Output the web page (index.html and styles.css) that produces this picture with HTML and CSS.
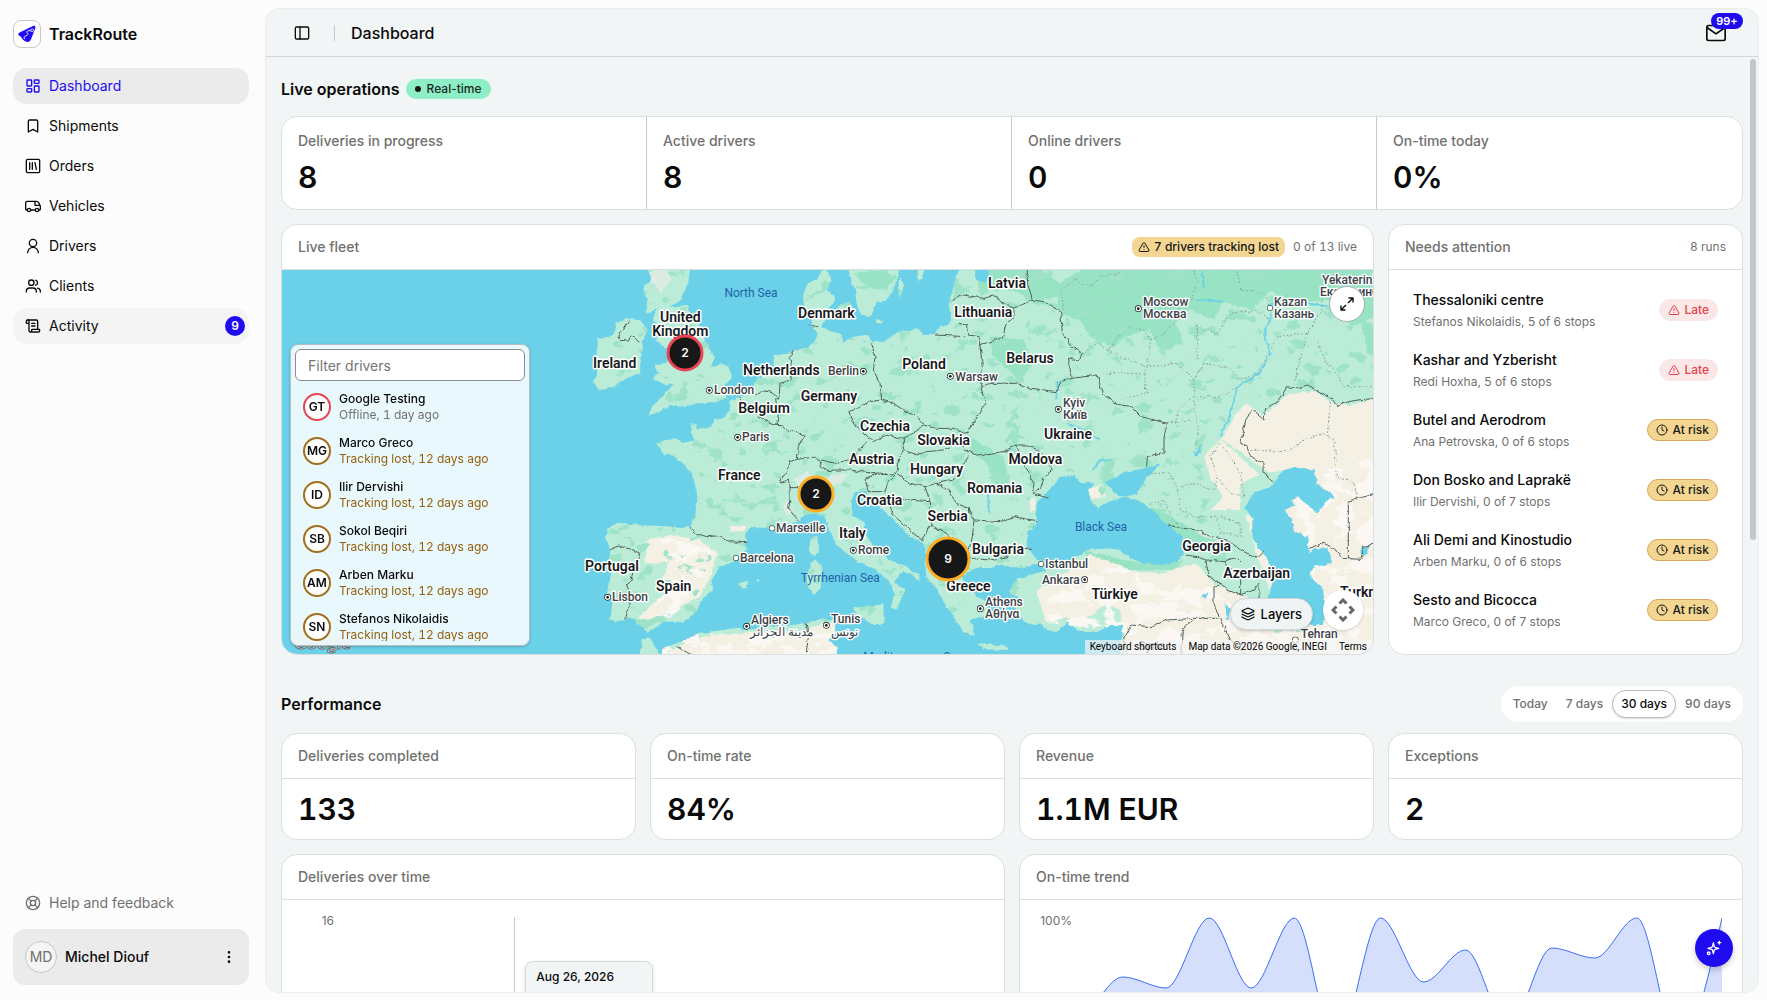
FILE: index.html
```html
<!DOCTYPE html>
<html lang="en">
<head>
<meta charset="utf-8">
<title>TrackRoute</title>
<meta name="viewport" content="width=device-width, initial-scale=1">
<link rel="stylesheet" href="styles.css">
</head>
<body>
<svg class="defs" width="0" height="0" aria-hidden="true">
  <symbol id="i-warn" viewBox="0 0 24 24"><path d="m21.73 18-8-14a2 2 0 0 0-3.48 0l-8 14A2 2 0 0 0 4 21h16a2 2 0 0 0 1.73-3M12 9v4M12 17h.01"/></symbol>
  <symbol id="i-clock" viewBox="0 0 24 24"><circle cx="12" cy="12" r="10"/><path d="M12 6v6l4 2"/></symbol>
</svg>
<div class="app">
  <aside class="sidebar">
    <div class="brand">
      <span class="logo"><svg viewBox="0 0 28 28"><path d="M4.500 14.500Q4.500 12.800 6.500 12L20.500 5.400Q23.400 4.600 23 7.500L18.500 19.500Q17.300 23 14.700 22.600Q10 21.500 8.500 18.500Q7.500 16 5.500 15.800Z" fill="#1f0bf0"/><path d="M19.500 8.500a1.500 1.500 0 1 0 .1 0M18.200 10.500Q13.500 9.800 14 12.500Q16.500 14.500 12 16.500Q9.500 17.500 11.500 19.500" fill="none" stroke="#fff" stroke-width="1"/></svg></span>
      <span class="brand-name">TrackRoute</span>
    </div>
    <nav class="nav">
      <a class="nav-item active" href="#"><svg class="icon" viewBox="0 0 24 24"><rect width="7" height="9" x="3" y="3" rx="1"/><rect width="7" height="5" x="14" y="3" rx="1"/><rect width="7" height="9" x="14" y="12" rx="1"/><rect width="7" height="5" x="3" y="16" rx="1"/></svg>Dashboard</a>
      <a class="nav-item" href="#"><svg class="icon" viewBox="0 0 24 24"><path d="m19 21-7-4-7 4V5a2 2 0 0 1 2-2h10a2 2 0 0 1 2 2z"/></svg>Shipments</a>
      <a class="nav-item" href="#"><svg class="icon" viewBox="0 0 24 24"><rect width="20" height="20" x="2" y="2" rx="2"/><path d="M7 7v10M11 7v10M15 7l2 10"/></svg>Orders</a>
      <a class="nav-item" href="#"><svg class="icon" viewBox="0 0 24 24"><path d="M3 18H2a1 1 0 0 1-1-1V7a2 2 0 0 1 2-2h12v6h7M15 5h2a5 5 0 0 1 3.500 2L23 12v5a1 1 0 0 1-1 1h-1M9 18h6"/><circle cx="6" cy="18" r="2.500"/><circle cx="18" cy="18" r="2.500"/></svg>Vehicles</a>
      <a class="nav-item" href="#"><svg class="icon" viewBox="0 0 24 24"><circle cx="12" cy="7.500" r="5.500"/><path d="M4 22a8 8 0 0 1 16 0"/></svg>Drivers</a>
      <a class="nav-item" href="#"><svg class="icon" viewBox="0 0 24 24"><path d="M17 21v-1a5 5 0 0 0-5-5H7a5 5 0 0 0-5 5v1M16 3.200a4 4 0 0 1 0 7.600M23 21v-1a5 5 0 0 0-4-4.900"/><circle cx="9.500" cy="7" r="4"/></svg>Clients</a>
      <a class="nav-item hovered" href="#"><svg class="icon" viewBox="0 0 24 24"><path d="M15 12h-5M15 8h-5M19 17V5a2 2 0 0 0-2-2H4"/><path d="M8 21h12a2 2 0 0 0 2-2v-1a1 1 0 0 0-1-1H11a1 1 0 0 0-1 1v1a2 2 0 1 1-4 0V5a2 2 0 1 0-4 0v2a1 1 0 0 0 1 1h3"/></svg>Activity<span class="count">9</span></a>
    </nav>
    <a class="nav-item help" href="#"><svg class="icon" viewBox="0 0 24 24"><circle cx="12" cy="12" r="10"/><circle cx="12" cy="12" r="4"/><path d="m4.930 4.930 4.240 4.240M14.830 9.170l4.240-4.240M14.830 14.830l4.240 4.240M9.170 14.830l-4.240 4.240"/></svg>Help and feedback</a>
    <button class="user" type="button"><span class="user-avatar">MD</span><span class="user-name">Michel Diouf</span><svg class="icon" viewBox="0 0 24 24"><g fill="currentColor"><circle cx="12" cy="5" r="1"/><circle cx="12" cy="12" r="1"/><circle cx="12" cy="19" r="1"/></g></svg></button>
  </aside>

  <main class="panel">
    <header class="topbar">
      <button class="plain" type="button" aria-label="Toggle sidebar"><svg class="icon" viewBox="0 0 24 24"><rect width="20" height="18" x="2" y="3" rx="2"/><path d="M9 3v18"/></svg></button>
      <span class="divider"></span>
      <h1>Dashboard</h1>
      <button class="plain mail" type="button" aria-label="Inbox"><svg class="icon" viewBox="0 0 24 24"><rect width="22" height="18" x="1" y="3" rx="2"/><path d="m2 6 10 7 10-7"/></svg><span class="mail-count">99+</span></button>
    </header>
    <div class="scroll">
      <section class="section">
        <div class="section-head"><h2>Live operations</h2><span class="realtime"><i></i>Real-time</span></div>
        <div class="card kpis">
          <div class="kpi"><span class="label">Deliveries in progress</span><strong>8</strong></div>
          <div class="kpi"><span class="label">Active drivers</span><strong>8</strong></div>
          <div class="kpi"><span class="label">Online drivers</span><strong>0</strong></div>
          <div class="kpi"><span class="label">On-time today</span><strong>0%</strong></div>
        </div>
        <div class="grid">
          <article class="card fleet">
            <div class="card-head"><span class="label">Live fleet</span><span class="lost"><svg class="icon" ><use href="#i-warn"/></svg>7 drivers tracking lost</span><span class="small">0 of 13 live</span></div>
            <div class="map">
              <svg class="map-art" viewBox="0 0 1091 384" preserveAspectRatio="xMidYMid slice">
                <defs>
                  <filter id="rough" filterUnits="userSpaceOnUse" x="-60" y="-60" width="2560" height="1300"><feTurbulence type="fractalNoise" baseFrequency=".05" numOctaves="3" seed="4" result="n"/><feDisplacementMap in="SourceGraphic" in2="n" scale="13" xChannelSelector="R" yChannelSelector="G"/></filter>
                  <filter id="forest" filterUnits="userSpaceOnUse" x="-60" y="-60" width="2560" height="1300" color-interpolation-filters="sRGB"><feTurbulence type="fractalNoise" baseFrequency=".018 .025" numOctaves="4" seed="11"/><feColorMatrix values="0 0 0 0 .62  0 0 0 0 .89  0 0 0 0 .785  18 0 0 0 -11.200"/><feComposite in2="SourceGraphic" operator="in"/></filter>
                  <filter id="sand" filterUnits="userSpaceOnUse" x="-60" y="-60" width="2560" height="1300" color-interpolation-filters="sRGB"><feTurbulence type="fractalNoise" baseFrequency=".015 .022" numOctaves="4" seed="23"/><feColorMatrix values="0 0 0 0 .984  0 0 0 0 .973  0 0 0 0 .957  18 0 0 0 -9"/><feComposite in2="SourceGraphic" operator="in"/></filter>
                  <path id="land" d="M148 1052L155 985 140 975 152 900 150 840 138 800 140 778 170 758 240 765 300 768 390 772 405 740 412 690 410 660 400 625 375 585 345 560 310 550 288 520 320 510 345 508 370 515 400 512 392 460 408 462 412 475 455 475 462 450 490 445 508 425 510 390 540 380 570 365 590 330 605 320 640 290 642 255 690 250 700 240 740 235 765 215 770 195 755 165 750 140 732 110 730 70 745 40 770 25 800 -10 812 30 800 60 825 75 820 100 795 125 800 150 785 165 810 185 840 190 850 215 880 200 920 195 935 215 965 215 1010 190 1075 175 1090 195 1125 195 1140 170 1170 165 1175 140 1170 100 1174 70 1190 20 1200 -10 1240 -10 1250 30 1275 40 1285 20 1292 -10 2500 -10 2500 1200 1690 1200 1680 1120 1690 1065 1650 1065 1612 1085 1582 1090 1552 1080 1522 1055 1492 1085 1467 1085 1442 1060 1412 1065 1382 1045 1367 1010 1377 985 1347 965 1372 925 1420 915 1455 885 1420 882 1390 895 1342 890 1307 885 1282 895 1262 890 1232 900 1205 925 1232 960 1262 985 1300 1030 1290 1045 1250 1040 1232 1050 1245 1098 1215 1085 1190 1060 1175 1030 1155 1005 1140 970 1100 925 1095 880 1100 840 1085 815 1050 800 1020 770 985 735 960 710 945 690 930 705 915 665 885 670 872 695 880 740 915 755 915 790 940 830 960 850 1000 875 1040 890 1080 920 1082 935 1050 910 1020 910 1005 940 1035 955 1030 980 1010 1015 992 1015 1003 970 985 930 950 900 900 880 870 855 830 825 805 770 790 735 760 730 735 735 710 755 665 770 620 775 570 770 555 800 560 840 520 875 480 890 455 930 460 960 425 990 405 1030 370 1055 310 1055 265 1088 248 1075 230 1055 205 1045 180 1055Z
                  M258 -10L275 20 250 60 262 90 258 135 290 115 278 150 300 190 290 212 320 235 330 262 315 282 285 285 297 308 278 325 320 345 345 342 310 375 285 400 262 437 300 425 330 405 360 410 410 400 450 400 500 385 490 355 512 320 510 290 480 280 452 292 465 260 440 220 425 180 400 135 380 105 330 110 360 90 385 40 390 -10Z
                  M170 158L200 146 240 150 264 180 250 210 242 250 240 310 200 325 160 350 120 360 100 340 115 310 105 270 115 230 108 205 140 205 165 190Z
                  M240 1180L245 1110 265 1105 285 1125 310 1180ZM300 1180L308 1135 350 1120 420 1090 520 1075 560 1080 650 1070 740 1060 790 1045 820 1050 830 1085 805 1110 830 1130 830 1180Z
                  M860 -10L872 30 885 60 890 100 902 137 932 140 950 100 980 90 1000 60 1020 -10ZM1072 -10L1095 -10 1085 30 1075 35ZM1015 40L1025 20 1030 45 1018 85ZM835 105L870 95 880 140 850 150 832 130ZM950 148L968 150 965 162 952 158Z
                  M750 805L772 800 775 840 765 860 750 845ZM765 868L785 890 782 955 762 975 742 950 740 905 752 885ZM880 1015L975 1002 970 1030 975 1065 940 1065 890 1035ZM535 940L565 932 560 955 540 955ZM590 925L600 930 590 937ZM1255 1120L1335 1128 1345 1140 1270 1138Z"/>
                  <clipPath id="landclip"><use href="#land"/></clipPath>
                </defs>
                <rect class="sea" width="1091" height="384"/>
                <g transform="translate(278) scale(.33333)">
                  <g filter="url(#rough)">
                    <use href="#land" class="land"/>
                    <g clip-path="url(#landclip)">
                      <g class="wood">
                        <path d="M1240 -10L1430 -10 1500 40 1580 -10 2460 -10 2460 130 2380 170 2300 90 2200 100 2130 60 2080 120 1990 95 1960 150 1890 120 1840 140 1870 220 1800 240 1770 180 1700 200 1660 230 1590 200 1560 150 1500 130 1490 80 1420 90 1350 60 1260 60ZM1290 200L1390 210 1420 280 1380 330 1300 260ZM2400 150L2460 170 2460 280 2420 240ZM880 10L960 0 1010 20 980 60 920 50ZM1720 690L1800 720 1900 780 1990 820 1950 850 1860 800 1780 760ZM1570 840L1690 870 1800 885 1870 870 1850 900 1720 900 1580 860ZM1220 490L1260 520 1330 560 1350 650 1310 660 1290 590 1230 540Z"/>
                      </g>
                      <g class="sand">
                        <path d="M260 810L330 795 420 810 470 850 450 920 420 980 380 1000 330 1020 270 1050 230 1050 280 1000 330 960 310 920 330 870 290 880 255 880ZM510 768L560 768 550 785 515 782ZM1932 560L1990 500 2020 440 2060 400 2110 440 2180 375 2260 360 2315 400 2370 405 2450 385 2450 1180 2300 1180 2130 960 2095 870 2060 740 2040 720 1950 720 1990 680 1950 620ZM1432 960L1530 900 1590 855 1640 870 1720 905 1800 910 1910 880 1960 940 2060 980 2150 1090 2300 1080 2450 1060 2450 1180 1700 1180 1690 1080 1580 1075 1520 1040 1450 1060ZM1410 690L1430 680 1425 720 1412 725ZM1575 660L1620 645 1640 680 1590 690ZM350 1130L450 1095 560 1090 740 1080 800 1055 820 1060 830 1085 805 1110 830 1130 830 1180 300 1180Z"/>
                      </g>
                      <path class="land" d="M2040 640L2110 610 2180 600 2180 700 2040 740ZM1975 500L1990 510 2130 610 2110 625 2040 560ZM1340 985L1400 960 1440 1000 1460 1060 1400 1060ZM1560 1060L1640 1000 1680 1020 1690 1080 1580 1090Z"/>
                      <g filter="url(#forest)"><path class="land" d="M120 -10H1860L2460 -10 2460 360 2100 380 1920 600 2060 900 1900 870 1500 830 1400 1000 700 1080 120 1080Z"/></g>
                      <g filter="url(#sand)"><path d="M300 800L460 840 440 960 330 1040 240 1040 330 960ZM2200 620L2460 600 2460 1180 2250 1180ZM1440 1000L1640 890 1900 920 2080 1050 2450 1080 2450 1180 1700 1180 1690 1080 1440 1060ZM300 1090H840V1180H300ZM2300 600L2450 560 2450 700 2200 640Z"/></g>
                      <path class="snow" d="M700 625L745 605 765 630 715 655ZM675 690L700 720 685 740 672 720ZM800 620L860 610 850 640 810 645ZM1895 775L1950 795 1990 820 1930 800ZM265 5L320 -5 335 30 300 70 285 40 265 35Z"/>
                    </g>
                    <g transform="translate(1212)" class="sea">
                      <path d="M225 690L265 655 285 620 330 618 345 635 390 640 372 660 385 700 400 718 440 690 490 682 520 690 560 715 600 755 655 800 660 850 640 875 590 885 540 880 500 865 470 840 430 835 370 840 320 870 260 877 220 870 188 830 190 790 215 765 215 730ZM432 650L425 635 480 610 540 595 592 583 550 620 530 650 515 675 470 680 450 665Z"/>
                      <path d="M843 715L870 670 920 650 960 600 1000 590 1052 600 1060 640 1112 682 1085 695 1060 730 1050 720 1000 680 985 690 990 710 960 720 985 750 990 785 1030 800 1035 850 1050 835 1090 835 1105 880 1050 890 1040 910 1045 930 1075 950 1085 1010 1080 1065 1020 1065 985 1060 940 1040 910 990 925 940 915 870 880 830 865 800 865 745ZM1190 840L1212 825 1210 855 1190 850ZM710 980L730 970 725 990ZM780 1000L800 1020 790 1050ZM685 560L715 520 710 550ZM145 912L235 892 250 898 160 922Z"/>
                    </g>
                    <g transform="translate(1212)" class="river"><path d="M715 -10L718 50M925 130L900 190 920 250 885 310 820 350 800 430 770 500M280 330V390M310 460L360 480 410 510M385 600L410 570 445 570M700 90L780 95M70 650L75 730M915 105L960 90 1100 110"/></g>
                    <g class="border">
                      <path d="M205 155L190 180 175 190 180 208 205 210 215 195 238 217M390 772L410 790 440 800 480 797 510 815 560 818M150 840L175 828 215 838 240 850 232 870 220 900 212 935 200 945 212 975 205 1010 197 1048M748 165L775 170M700 240L690 265 695 300 690 330 660 340 658 375 655 385M585 375L610 362 640 368 655 385M540 380L545 400 580 430 615 450 640 465M650 385L655 430 650 465 640 465 670 468 680 480 720 490 732 495 715 530 712 568M755 562L712 568 690 575 685 600 665 625 660 638 685 630 690 650 715 650M690 650L690 690 685 715 705 740 715 750M755 560L780 575 785 590 810 605 820 600 870 600M780 570L830 580 860 570 890 575 890 550 920 515M935 220L945 260 940 300 960 340 965 390 930 395 870 425 880 460 940 515 975 495 1030 505 1060 490 1090 465 1060 430 1030 420 1000 400 965 390M1090 465L1130 475 1180 475 1212 490 1230 485M1030 505L1030 540 1070 555 1100 545 1150 540 1190 520 1212 530M1030 540L1015 570 1015 600 1000 615 950 612 870 600M915 625L925 665 975 665 985 635 1010 610 1050 640 1095 650 1130 640 1180 630 1200 600 1225 560M915 625L950 612M1095 650L1110 695 1040 690 980 680 1000 735 1050 780 1085 810M1130 640L1160 655 1190 700 1225 715 1227 730M1108 695L1115 760 1085 810M1110 765L1160 790 1200 850M1125 195L1215 200M1175 95L1200 75 1212 76M738 1060L745 1100 738 1155M350 1130L395 1155"/>
                      <path transform="translate(1212)" d="M15 720L30 750 110 755 150 740 215 752M30 750L25 800 15 840M15 865L80 870 130 860 145 850 180 835 200 835M-15 160L10 165 15 195 45 200 55 290 50 350 65 400 40 440 15 480 10 490M0 75L60 85 95 75 110 95 150 115 150 145 125 165 115 205 45 225M190 -10L190 40 205 90 240 95 290 125 295 190 325 230 355 250 345 270 310 265 325 325M205 90L150 115M50 350L80 340 160 340 200 355 280 365 290 335 325 325 400 315 415 370 450 400 500 410 530 440 610 460 600 500 600 545 550 560 548 590M0 540L40 555 120 545 155 525 190 600 210 640 205 670 255 685M155 525L195 525 235 550 265 600 235 625 235 650 215 665M930 635L900 610 900 580 860 560 850 530 830 520 845 450 865 420 900 450 905 415 940 395 970 350 1010 355 1030 345 1100 385 1120 410 1150 395 1180 390 1240 385M1240 670L1153 693 1153 868M1035 835L1080 820 1110 835 1135 865 1190 868 1200 830 1240 815M610 765L660 775 700 780 740 800 790 810 830 840 880 865 900 845M665 855L700 860 725 870 780 875 820 865 835 880M725 870L735 920 770 940 790 960 830 975 870 960 885 940 885 985M780 875L830 930 830 975M770 940L750 950 750 1000 765 1040 800 1110 850 1160M490 1160L480 1100 500 1065 560 1070 610 1050 690 1045 760 1045M690 1045L655 1080 650 1160"/>
                      <path class="dots" transform="translate(1212)" d="M290 60L330 30 380 50 410 20 470 10M290 60L300 120M355 250L400 220 430 240 490 170 540 180 560 210 600 190 650 140 640 110 680 90 700 40 690 -10M430 240L470 260 550 290 560 210M415 310L540 310 550 290 640 280 690 330 720 280 790 290 830 330 880 310M540 310L550 370 460 390M700 270L700 170 760 190 800 130 880 120 920 150M640 470L640 420 690 380 770 380 820 350M690 380L700 500 690 550M610 460L680 450M720 280L690 330 690 380M880 310L940 200 1030 190 1070 130 1080 60M1030 190L990 340M1060 210L1080 270 1120 310 1140 350 1230 350M850 540L970 545 1020 510 1080 490 1110 510 1120 620 1170 640 1180 690M1100 385L1090 490M770 510L740 560 760 620 800 670 840 680 830 610 780 530M550 610L620 610 640 660 680 640 750 660 760 620M640 660L650 720 690 740 760 740 770 790 830 800 830 760 770 740M560 700L600 690 620 740 650 770M820 -10L830 60 900 70 920 110"/>
                    </g>
                  </g>
                  <g class="labels">
                    <g class="water"><text x="573" y="81">North Sea</text><text x="841" y="936">Tyrrhenian Sea</text><text x="1623" y="783">Black Sea</text><text x="1060" y="1172">Mediterranean Sea</text></g>
                    <g class="country"><text x="361" y="156">United</text><text x="361" y="198">Kingdom</text><text x="164" y="295">Ireland</text><text x="799" y="145">Denmark</text><text x="664" y="315">Netherlands</text><text x="807" y="394">Germany</text><text x="612" y="430">Belgium</text><text x="538" y="631">France</text><text x="975" y="484">Czechia</text><text x="1151" y="526">Slovakia</text><text x="935" y="583">Austria</text><text x="1130" y="613">Hungary</text><text x="959" y="706">Croatia</text><text x="1163" y="754">Serbia</text><text x="877" y="804">Italy</text><text x="156" y="903">Portugal</text><text x="341" y="963">Spain</text><text x="1092" y="298">Poland</text><text x="1341" y="55">Latvia</text><text x="1270" y="142">Lithuania</text><text x="1410" y="280">Belarus</text><text x="1524" y="508">Ukraine</text><text x="1426" y="583">Moldova</text><text x="1304" y="670">Romania</text><text x="1314" y="852">Bulgaria</text><text x="1940" y="844">Georgia</text><text x="2090" y="924">Azerbaijan</text><text x="1664" y="987">Türkiye</text><text x="1225" y="963">Greece</text><text x="2470" y="982">Turkmenistan</text></g>
                    <g class="city"><text x="462" y="373">London</text><text x="546" y="514">Paris</text><text x="648" y="786">Marseille</text><text x="540" y="876">Barcelona</text><text x="156" y="993">Lisbon</text><text x="894" y="852">Rome</text><text x="573" y="1062">Algiers</text><text x="570" y="1097">مدينة الجزائر</text><text x="813" y="1060">Tunis</text><text x="813" y="1097">تونس</text><text x="1186" y="333">Warsaw</text><text x="804" y="315">Berlin</text><text x="1509" y="411">Kyiv</text><text x="1509" y="447">Київ</text><text x="1749" y="108">Moscow</text><text x="1749" y="144">Москва</text><text x="2142" y="108">Kazan</text><text x="2142" y="144">Казань</text><text x="2286" y="42">Yekaterinburg</text><text x="2280" y="78">Екатеринбург</text><text x="1455" y="894">Istanbul</text><text x="1446" y="942">Ankara</text><text x="1275" y="1008">Athens</text><text x="1275" y="1044">Αθήνα</text><text x="2222" y="1104">Tehran</text><text x="1735" y="1140">Syria</text></g>
                    <g class="capital"><circle cx="448" cy="361" r="8"/><circle cx="533" cy="502" r="8"/><circle cx="143" cy="982" r="8"/><circle cx="880" cy="841" r="8"/><circle cx="560" cy="1069" r="8"/><circle cx="799" cy="1066" r="8"/><circle cx="910" cy="304" r="8"/><circle cx="1171" cy="319" r="8"/><circle cx="1495" cy="418" r="8"/><circle cx="1735" cy="116" r="8"/><circle cx="1574" cy="929" r="8"/><circle cx="1261" cy="1016" r="8"/><circle cx="2206" cy="1110" r="8"/></g>
                    <g class="dot"><circle cx="448" cy="361" r="4"/><circle cx="533" cy="502" r="4"/><circle cx="143" cy="982" r="4"/><circle cx="880" cy="841" r="4"/><circle cx="560" cy="1069" r="4"/><circle cx="799" cy="1066" r="4"/><circle cx="910" cy="304" r="4"/><circle cx="1171" cy="319" r="4"/><circle cx="1495" cy="418" r="4"/><circle cx="1735" cy="116" r="4"/><circle cx="1574" cy="929" r="4"/><circle cx="1261" cy="1016" r="4"/></g>
                    <g class="town"><circle cx="636" cy="775" r="7"/><circle cx="528" cy="864" r="7"/><circle cx="2130" cy="114" r="7"/><circle cx="1443" cy="882" r="7"/></g>
                  </g>
                </g>
                <text class="google" x="12" y="379">Google</text>
                <g class="cluster"><circle class="red" cx="403" cy="83" r="17"/><text x="403" y="87">2</text><circle cx="534" cy="224" r="17"/><text x="534" y="228">2</text><circle cx="666" cy="289" r="21"/><text x="666" y="293">9</text></g>
              </svg>
              <div class="drivers">
                <input class="filter" type="text" placeholder="Filter drivers" aria-label="Filter drivers">
                <ul>
                  <li><span class="avatar offline">GT</span><div><b>Google Testing</b><small class="muted">Offline, 1 day ago</small></div></li>
                  <li><span class="avatar">MG</span><div><b>Marco Greco</b><small>Tracking lost, 12 days ago</small></div></li>
                  <li><span class="avatar">ID</span><div><b>Ilir Dervishi</b><small>Tracking lost, 12 days ago</small></div></li>
                  <li><span class="avatar">SB</span><div><b>Sokol Beqiri</b><small>Tracking lost, 12 days ago</small></div></li>
                  <li><span class="avatar">AM</span><div><b>Arben Marku</b><small>Tracking lost, 12 days ago</small></div></li>
                  <li><span class="avatar">SN</span><div><b>Stefanos Nikolaidis</b><small>Tracking lost, 12 days ago</small></div></li>
                </ul>
              </div>
              <button class="expand" type="button" aria-label="Full screen"><svg class="icon" viewBox="0 0 24 24"><path d="M15 3h6v6M21 3l-7 7M3 21l7-7M9 21H3v-6"/></svg></button>
              <div class="map-tools">
                <button class="layers" type="button"><svg class="icon" viewBox="0 0 24 24"><path d="M12.830 2.180a2 2 0 0 0-1.660 0L2.600 6.080a1 1 0 0 0 0 1.830l8.580 3.910a2 2 0 0 0 1.660 0l8.580-3.900a1 1 0 0 0 0-1.830zM2 12a1 1 0 0 0 .58.910l8.600 3.910a2 2 0 0 0 1.650 0l8.580-3.900A1 1 0 0 0 22 12M2 17a1 1 0 0 0 .58.910l8.600 3.910a2 2 0 0 0 1.650 0l8.580-3.900A1 1 0 0 0 22 17"/></svg>Layers</button>
                <button class="pan" type="button" aria-label="Map camera controls"><svg viewBox="0 0 24 24"><path d="m8.500 5.500 3.500-3.500 3.500 3.500M8.500 18.500 12 22l3.500-3.500M5.500 8.500 2 12l3.500 3.500M18.500 8.500 22 12l-3.500 3.500"/></svg></button>
              </div>
              <div class="credits"><span>Keyboard shortcuts</span><span>Map data ©2026 Google, INEGI</span><span>Terms</span></div>
            </div>
          </article>
          <article class="card attention">
            <div class="card-head"><span class="label">Needs attention</span><span class="small">8 runs</span></div>
            <ul class="runs">
              <li><div><b>Thessaloniki centre</b><small>Stefanos Nikolaidis, 5 of 6 stops</small></div><span class="tag late"><svg class="icon"><use href="#i-warn"/></svg>Late</span></li>
              <li><div><b>Kashar and Yzberisht</b><small>Redi Hoxha, 5 of 6 stops</small></div><span class="tag late"><svg class="icon"><use href="#i-warn"/></svg>Late</span></li>
              <li><div><b>Butel and Aerodrom</b><small>Ana Petrovska, 0 of 6 stops</small></div><span class="tag risk"><svg class="icon"><use href="#i-clock"/></svg>At risk</span></li>
              <li><div><b>Don Bosko and Laprakë</b><small>Ilir Dervishi, 0 of 7 stops</small></div><span class="tag risk"><svg class="icon"><use href="#i-clock"/></svg>At risk</span></li>
              <li><div><b>Ali Demi and Kinostudio</b><small>Arben Marku, 0 of 6 stops</small></div><span class="tag risk"><svg class="icon"><use href="#i-clock"/></svg>At risk</span></li>
              <li><div><b>Sesto and Bicocca</b><small>Marco Greco, 0 of 7 stops</small></div><span class="tag risk"><svg class="icon"><use href="#i-clock"/></svg>At risk</span></li>
            </ul>
          </article>
        </div>
      </section>

      <section class="section">
        <div class="section-head tall"><h2>Performance</h2><div class="range"><button type="button">Today</button><button type="button">7 days</button><button type="button" class="on">30 days</button><button type="button">90 days</button></div></div>
        <div class="grid">
          <article class="card metric"><div class="card-head"><span class="label">Deliveries completed</span></div><strong>133</strong></article>
          <article class="card metric"><div class="card-head"><span class="label">On-time rate</span></div><strong>84%</strong></article>
          <article class="card metric"><div class="card-head"><span class="label">Revenue</span></div><strong>1.1M EUR</strong></article>
          <article class="card metric"><div class="card-head"><span class="label">Exceptions</span></div><strong>2</strong></article>
          <article class="card chart"><div class="card-head"><span class="label">Deliveries over time</span></div>
            <div class="plot"><span class="tick">16</span><div class="canvas"><div class="cursor"><div class="tip">Aug 26, 2026</div></div></div></div>
          </article>
          <article class="card chart"><div class="card-head"><span class="label">On-time trend</span></div>
            <div class="plot"><span class="tick">100%</span><svg class="canvas" viewBox="0 0 641 260" preserveAspectRatio="none"><path class="area" d="M1 110C15 90 29 60 43 60C57 60 72 71 86 71C100 71 115 1 129 1C143 1 157 71 171 71C185 71 200 1 214 1C228 1 242 130 256 130C270 130 286 1 300 1C314 1 329 65 343 65C357 65 371 33 385 33C399 33 413 110 428 110C442 110 457 31 471 31C485 31 500 41 514 41C528 41 542 1 556 1C570 1 584 130 598 130C612 130 627 60 641 1V260H1Z"/><path class="line" d="M1 110C15 90 29 60 43 60C57 60 72 71 86 71C100 71 115 1 129 1C143 1 157 71 171 71C185 71 200 1 214 1C228 1 242 130 256 130C270 130 286 1 300 1C314 1 329 65 343 65C357 65 371 33 385 33C399 33 413 110 428 110C442 110 457 31 471 31C485 31 500 41 514 41C528 41 542 1 556 1C570 1 584 130 598 130C612 130 627 60 641 1"/></svg></div>
          </article>
        </div>
      </section>
    </div>
    <span class="thumb"></span>
    <button class="assist" type="button" aria-label="Assistant"><svg class="icon" viewBox="0 0 24 24"><path d="M11 4.500 12.300 9.600a2 2 0 0 0 1.400 1.400L19 12.500l-5.300 1.500a2 2 0 0 0-1.400 1.400L11 20.500l-1.300-5.100a2 2 0 0 0-1.400-1.400L3 12.500 8.300 11a2 2 0 0 0 1.400-1.400zM20 2v4M22 4h-4"/><circle cx="4" cy="20" r="2"/></svg></button>
  </main>
</div>
</body>
</html>
```
FILE: styles.css
```css
* { box-sizing: border-box; }
body { margin: 0; background: #fcfcfc; color: #0a0a0a; font-family: Inter, sans-serif; font-size: 14px; line-height: 20px; }
button, input { font: inherit; color: inherit; }
button { cursor: pointer; }
ul { list-style: none; margin: 0; padding: 0; }
a { color: inherit; text-decoration: none; }
h1, h2 { margin: 0; font-size: 16px; line-height: 24px; font-weight: 600; }
b { font-weight: 500; }
.defs { position: absolute; }
.icon { width: 16px; height: 16px; flex: none; fill: none; stroke: currentColor; stroke-width: 2; stroke-linecap: round; stroke-linejoin: round; }

.app { display: flex; height: 100vh; padding: 8px 8px 7px 0; }

/* Sidebar */
.sidebar { width: 265px; flex: none; display: flex; flex-direction: column; padding: 12px 16px 8px 13px; }
.brand { display: flex; align-items: center; gap: 8px; margin-bottom: 20px; }
.logo { width: 28px; height: 28px; border: 1px solid #c8c8c8; border-radius: 8px; background: #fff; overflow: hidden; }
.logo svg { display: block; width: 26px; height: 26px; }
.brand-name { font-size: 16px; font-weight: 600; }
.nav { display: flex; flex-direction: column; gap: 4px; }
.nav-item { display: flex; align-items: center; gap: 8px; height: 36px; padding: 0 4px 0 12px; border-radius: 14px; }
.active { background: #ebebeb; color: #1f0bf0; }
.hovered { background: #f4f4f4; }
.count { margin-left: auto; width: 20px; height: 20px; border-radius: 10px; background: #1f0bf0; color: #fff; font-size: 12px; font-weight: 600; text-align: center; }
.help { margin-top: auto; margin-bottom: 8px; color: #71716f; }
.user { display: flex; align-items: center; gap: 8px; height: 56px; padding: 0 12px; border: 0; border-radius: 12px; background: #ebebeb; text-align: left; font-weight: 500; }
.user-avatar { width: 32px; height: 32px; border: 1px solid #c4c8c8; border-radius: 16px; background: #f4f5f5; color: #71716f; font-size: 14px; font-weight: 400; line-height: 30px; text-align: center; }
.user-name { flex: 1; }

/* Main panel */
.panel { position: relative; flex: 1; min-width: 0; display: flex; flex-direction: column; border: 1px solid #ebefef; border-radius: 14px; background: #f2f5f6; overflow: hidden; }
.topbar { display: flex; align-items: center; height: 48px; flex: none; padding: 0 32px 0 28px; border-bottom: 1px solid #d2d5d6; }
.topbar h1 { font-weight: 500; }
.plain { display: flex; padding: 0; border: 0; background: none; }
.divider { width: 1px; height: 16px; margin: 0 16px 0 24px; background: #c8cbcc; }
.mail { position: relative; margin-left: auto; }
.mail .icon { width: 20px; height: 20px; }
.mail-count { position: absolute; left: 5px; top: -10px; width: 32px; border-radius: 8px; background: #1f0bf0; color: #fff; font-size: 11px; font-weight: 600; line-height: 16px; text-align: center; }
.scroll { flex: 1; min-height: 0; overflow-y: auto; scrollbar-width: none; padding: 20px 15px; }
.thumb { position: absolute; right: 2px; top: 50px; width: 6px; height: 481px; border-radius: 3px; background: #c4c6c8; }
.section { margin-bottom: 31px; }
.section-head { display: flex; align-items: center; gap: 6px; height: 24px; margin-bottom: 15px; }
.realtime { display: flex; align-items: center; gap: 6px; height: 20px; padding: 0 9px; border-radius: 10px; background: #8eeec6; color: #1a2a24; font-size: 12px; font-weight: 500; }
.realtime i { width: 6px; height: 6px; border-radius: 3px; background: #171717; }
.card { min-width: 0; border: 1px solid #dcdfdf; border-radius: 16px; background: #fff; overflow: hidden; }
.label { color: #71716f; font-weight: 500; }
.small { color: #71716f; font-size: 12px; font-variant-numeric: tabular-nums; }
strong { font-size: 30px; line-height: 36px; font-weight: 600; font-variant-numeric: tabular-nums; }
.kpis { display: grid; grid-template-columns: repeat(4, 1fr); margin-bottom: 14px; }
.kpi { display: flex; flex-direction: column; gap: 8px; height: 92px; padding: 14px 16px; border-right: 1px solid #c8cbcc; }
.kpi:last-child { border-right: 0; }
.grid { display: grid; grid-template-columns: repeat(4, minmax(0, 1fr)); gap: 14px; }
.card-head { display: flex; align-items: center; gap: 8px; height: 45px; padding: 0 16px; border-bottom: 1px solid #dcdfdf; }
.card-head .label { margin-right: auto; }
.lost { display: flex; align-items: center; gap: 4px; height: 20px; padding: 0 6px; border-radius: 8px; background: #f2d692; color: #171717; font-size: 12px; font-weight: 500; font-variant-numeric: tabular-nums; }
.lost .icon { width: 12px; height: 12px; }

/* Fleet map */
.fleet { grid-column: span 3; }
.map { position: relative; height: 384px; }
.map-art { display: block; width: 100%; height: 100%; }
.sea { fill: #6bd1e8; }
.land { fill: #bbecd8; }
.wood { fill: #93e2c2; opacity: .9; }
.sand { fill: #f4f0e4; }
.snow { fill: #e6ebe9; opacity: .8; }
.river { fill: none; stroke: #6bd1e8; stroke-width: 5; }
.border { fill: none; stroke: #4f615c; stroke-width: 3; }
.dots { stroke: #83a599; stroke-dasharray: 5 6; }
.labels { font-family: Roboto, "Noto Sans", sans-serif; paint-order: stroke; stroke-linejoin: round; }
.country { font-size: 42px; font-weight: 600; fill: #17191c; stroke: #fff; stroke-width: 9; text-anchor: middle; }
.city { font-size: 36px; fill: #3b4248; stroke: #fff; stroke-width: 8; font-weight: 500; }
.water { font-size: 36px; fill: #1f64a8; text-anchor: middle; }
.capital { fill: #fff; stroke: #17191c; stroke-width: 4; }
.dot { fill: #17191c; }
.town { fill: #fff; stroke: #4a5254; stroke-width: 4; }
.google { font-family: "Open Sans", sans-serif; font-size: 17px; font-weight: 600; fill: #fff; stroke: #6b7377; stroke-width: 1; }
.cluster { fill: #171717; stroke: #fdae25; stroke-width: 3; font-size: 12px; font-weight: 600; text-anchor: middle; }
.cluster .red { stroke: #ea4452; }
.cluster text { fill: #fff; stroke: none; }
.drivers { position: absolute; left: 8px; bottom: 8px; width: 240px; height: 302px; display: flex; flex-direction: column; padding: 4px; border: 1px solid #b4bec2; border-radius: 8px; background: rgba(255, 255, 255, .85); backdrop-filter: blur(8px); box-shadow: 0 1px 3px rgba(0, 0, 0, .2); }
.filter { width: 100%; height: 32px; flex: none; padding: 0 12px; border: 1px solid #8a8d8f; border-radius: 6px; background: #fff; }
.filter::placeholder { color: #757575; opacity: 1; }
.drivers ul { flex: 1; min-height: 0; overflow: hidden; padding-top: 4px; }
.drivers li { display: flex; align-items: center; gap: 8px; height: 44px; padding: 0 8px; font-size: 12px; line-height: 16px; font-variant-numeric: tabular-nums; }
.avatar { width: 28px; height: 28px; border: 2px solid #a0701c; border-radius: 14px; background: #fff; font-weight: 600; line-height: 24px; text-align: center; }
.avatar.offline { border-color: #ea4452; }
.drivers b, .drivers small { display: block; font-size: 12px; }
.drivers small { color: #96600f; }
.drivers .muted { color: #71716f; }
.expand { position: absolute; right: 8px; top: 16px; display: grid; place-items: center; width: 36px; height: 36px; padding: 0; border: 1px solid #a9adaf; border-radius: 18px; background: #fff; }
.map-tools { position: absolute; right: 10px; bottom: 24px; display: flex; align-items: flex-end; gap: 10px; }
.layers { display: flex; align-items: center; gap: 6px; height: 32px; padding: 0 10px; border: 1px solid #d2d8da; border-radius: 16px; background: #f0f4f5; font-size: 13px; font-weight: 500; box-shadow: 0 1px 3px rgba(0, 0, 0, .2); }
.layers .icon { width: 14px; height: 14px; }
.pan { width: 40px; height: 40px; padding: 8px; border: 0; border-radius: 20px; background: #fff; box-shadow: 0 1px 3px rgba(0, 0, 0, .15); }
.pan svg { display: block; fill: none; stroke: #666; stroke-width: 3; }
.credits { position: absolute; right: 0; bottom: 0; display: flex; gap: 12px; padding: 0 6px 0 5px; background: rgba(245, 245, 245, .7); font-family: Roboto, sans-serif; font-size: 10px; line-height: 14px; color: #000; }

/* Needs attention */
.runs { padding: 10px 24px; }
.runs li { display: flex; align-items: center; justify-content: space-between; height: 60px; }
.runs b { display: block; line-height: 20px; }
.runs small { display: block; margin-top: 4px; font-size: 12px; line-height: 16px; color: #71716f; }
.tag { display: flex; align-items: center; gap: 4px; height: 22px; padding: 0 8px; border: 1px solid; border-radius: 11px; font-size: 12px; font-weight: 500; }
.tag .icon { width: 12px; height: 12px; }
.late { background: #fae8e9; border-color: #fae8e9; color: #e5404b; }
.risk { background: #f2d692; border-color: #d9a75c; color: #171717; }

/* Performance */
.section-head.tall { height: 36px; margin-bottom: 11px; }
.range { display: flex; align-items: center; margin-left: auto; height: 36px; padding: 0 3px; border-radius: 18px; background: #fff; }
.range button { height: 28px; padding: 0 8px; border: 1px solid transparent; border-radius: 14px; background: none; color: #71716f; font-size: 12px; font-weight: 500; }
.range .on { border-color: #b9bcbd; background: #fff; color: #0a0a0a; box-shadow: 0 1px 2px rgba(0, 0, 0, .15); }
.metric strong { display: block; padding: 12px 16px; }
.chart { grid-column: span 2; }
.plot { display: flex; height: 280px; padding: 17px 20px 0; }
.tick { width: 40px; flex: none; margin-top: -6px; color: #71716f; font-size: 12px; }
.plot .tick { text-align: right; padding-right: 8px; }
.canvas { flex: 1; min-width: 0; height: 260px; }
.cursor { position: relative; width: 27%; height: 100%; border-right: 1px solid #c8cbcc; }
.tip { position: absolute; left: calc(100% + 11px); top: 44px; width: 128px; height: 60px; padding: 5px 10px; border: 1px solid #d6dadb; border-radius: 8px; background: #f2f5f6; font-size: 12px; font-weight: 500; box-shadow: 0 2px 5px rgba(0, 0, 0, .12); }
.area { fill: #d5defb; }
.line { fill: none; stroke: #3b6ff0; stroke-width: 1; vector-effect: non-scaling-stroke; }
.assist { position: absolute; right: 25px; bottom: 25px; display: grid; place-items: center; width: 38px; height: 38px; padding: 0; border: 0; border-radius: 19px; background: #1f0bf0; color: #fff; box-shadow: 0 3px 6px rgba(0, 0, 0, .2); }
```
